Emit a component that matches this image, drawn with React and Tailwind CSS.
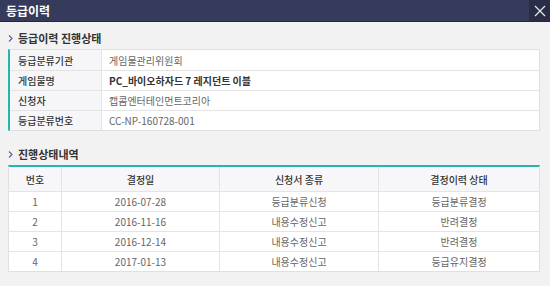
const info = [
  { label: '등급분류기관', value: '게임물관리위원회' },
  { label: '게임물명', value: 'PC_바이오하자드 7 레지던트 이블', bold: true },
  { label: '신청자', value: '캡콤엔터테인먼트코리아' },
  { label: '등급분류번호', value: 'CC-NP-160728-001' },
];

const history = [
  { no: 1, date: '2016-07-28', kind: '등급분류신청', state: '등급분류결정' },
  { no: 2, date: '2016-11-16', kind: '내용수정신고', state: '반려결정' },
  { no: 3, date: '2016-12-14', kind: '내용수정신고', state: '반려결정' },
  { no: 4, date: '2017-01-13', kind: '내용수정신고', state: '등급유지결정' },
];

const SectionTitle = ({ children }) => (
  <div className="flex items-center gap-[5px] h-[16px] text-[11px] font-bold text-[#333]">
    <svg width="5" height="7" viewBox="0 0 5 7" className="shrink-0">
      <path d="M1 0.5 L4 3.5 L1 6.5" fill="none" stroke="#6a5aa8" strokeWidth="1.2" />
    </svg>
    {children}
  </div>
);

export default function App() {
  return (
    <div
      className="w-[550px] h-[286px] bg-[#f2f2f2] overflow-hidden"
      style={{ fontFamily: '"Noto Sans CJK KR", "Noto Sans", sans-serif' }}
    >
      <div className="flex items-center justify-between h-[22px] bg-[#363a5b] border-b border-[#24273d]">
        <span className="pl-[6px] text-[12px] font-bold text-white">등급이력</span>
        <button className="flex items-center justify-center w-[21px] h-[21px] bg-[#2a2d47]">
          <svg width="12" height="12" viewBox="0 0 12 12">
            <path d="M1 1 L11 11 M11 1 L1 11" stroke="#e4e4ea" strokeWidth="1.3" />
          </svg>
        </button>
      </div>

      <div className="pl-[8px] pr-[10px] pt-[8px]">
        <SectionTitle>등급이력 진행상태</SectionTitle>
        <div className="mt-[3px] bg-white border border-[#e0e0e0] border-l-2 border-l-[#27b3ae]">
          {info.map((row, i) => (
            <div
              key={row.label}
              className={`flex h-[20px] items-center text-[10px] ${i > 0 ? 'border-t border-[#e4e4e4]' : ''}`}
            >
              <div className="w-[92px] h-full flex items-center pl-[8px] bg-[#f6f6f8] border-r border-[#e4e4e4] font-medium text-[#333]">
                {row.label}
              </div>
              <div className={`pl-[7px] ${row.bold ? 'font-bold text-[#333]' : 'text-[#666]'}`}>
                {row.value}
              </div>
            </div>
          ))}
        </div>

        <div className="mt-[15px]">
          <SectionTitle>진행상태내역</SectionTitle>
        </div>
        <div className="mt-[3px] bg-white border border-[#e0e0e0] border-t-2 border-t-[#27b3ae]">
          <div className="flex h-[24px] items-center bg-[#f7f7f9] text-[10px] font-medium text-[#333] text-center">
            <div className="w-[53px] h-full flex items-center justify-center border-r border-[#e4e4e4]">번호</div>
            <div className="w-[158px] h-full flex items-center justify-center border-r border-[#e4e4e4]">결정일</div>
            <div className="w-[159px] h-full flex items-center justify-center border-r border-[#e4e4e4]">신청서 종류</div>
            <div className="flex-1 h-full flex items-center justify-center">결정이력 상태</div>
          </div>
          {history.map((row) => (
            <div key={row.no} className="flex h-[20px] items-center border-t border-[#e4e4e4] text-[10px] text-[#666]">
              <div className="w-[53px] h-full flex items-center justify-center border-r border-[#e4e4e4]">{row.no}</div>
              <div className="w-[158px] h-full flex items-center justify-center border-r border-[#e4e4e4]">{row.date}</div>
              <div className="w-[159px] h-full flex items-center justify-center border-r border-[#e4e4e4]">{row.kind}</div>
              <div className="flex-1 h-full flex items-center justify-center">{row.state}</div>
            </div>
          ))}
        </div>
      </div>
    </div>
  );
}
